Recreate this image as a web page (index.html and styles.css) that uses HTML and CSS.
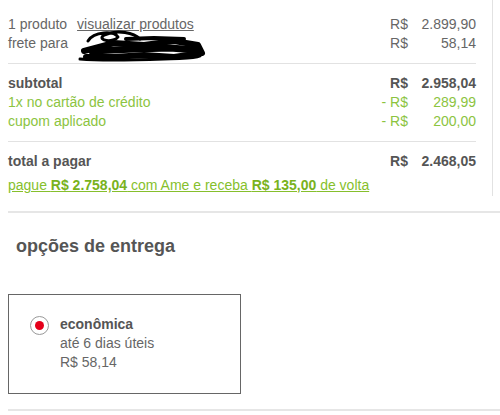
FILE: index.html
```html
<!DOCTYPE html>
<html lang="pt-BR">
<head>
    <meta charset="UTF-8">
    <title>Resumo do pedido</title>
    <link rel="stylesheet" href="styles.css">
</head>
<body>
    <div class="summary">
        <div class="group">
            <div class="row">
                <span class="label">1 produto <a href="#" class="link">visualizar produtos</a></span>
                <span class="cur">R$</span>
                <span class="val">2.899,90</span>
            </div>
            <div class="row">
                <span class="label">frete para</span>
                <span class="cur">R$</span>
                <span class="val">58,14</span>
                <svg class="scribble" width="140" height="34" viewBox="0 0 140 34">
                    <g fill="none" stroke="#000" stroke-linecap="round" stroke-linejoin="round">
                        <path stroke-width="3" d="M14 12 C20 2 40 2 44 8 C40 14 22 12 30 6 C44 0 60 4 66 10"/>
                        <path stroke-width="6" d="M10 22 L40 14 L70 16 L100 12 L124 16 L128 24 L100 28 L70 26 L40 28 L12 28"/>
                        <path stroke-width="7" d="M18 22 L60 20 L96 19 L122 21"/>
                        <path stroke-width="3" d="M6 30 C30 32 60 31 90 30 C110 29 120 30 126 27"/>
                        <path stroke-width="4" d="M52 10 L80 9 L110 10"/>
                    </g>
                </svg>
            </div>
        </div>

        <div class="group">
            <div class="row strong">
                <span class="label">subtotal</span>
                <span class="cur">R$</span>
                <span class="val">2.958,04</span>
            </div>
            <div class="row green">
                <span class="label">1x no cartão de crédito</span>
                <span class="cur">- R$</span>
                <span class="val">289,99</span>
            </div>
            <div class="row green">
                <span class="label">cupom aplicado</span>
                <span class="cur">- R$</span>
                <span class="val">200,00</span>
            </div>
        </div>

        <div class="group last">
            <div class="row strong">
                <span class="label">total a pagar</span>
                <span class="cur">R$</span>
                <span class="val">2.468,05</span>
            </div>
            <a href="#" class="ame">pague <b>R$ 2.758,04</b> com Ame e receba <b>R$ 135,00</b> de volta</a>
        </div>
    </div>

    <div class="delivery">
        <h3 class="title">opções de entrega</h3>
        <label class="option">
            <span class="radio"><span class="dot"></span></span>
            <span class="info">
                <span class="name">econômica</span>
                <span>até 6 dias úteis</span>
                <span>R$ 58,14</span>
            </span>
        </label>
    </div>
</body>
</html>
```

FILE: styles.css
```css
body {
    margin: 0;
    font-family: "Liberation Sans", Arial, sans-serif;
    font-size: 14px;
    color: #666;
    background: #fff;
}
.summary {
    width: 468px;
    padding: 5px 16px 1px 8px;
    border-right: 1px solid #e2e2e2;
}
.group {
    padding: 10px 0;
    border-bottom: 1px solid #e2e2e2;
}
.group.last {
    border-bottom: none;
    padding-bottom: 0;
}
.row {
    position: relative;
    display: flex;
    line-height: 19px;
}
.label {
    flex: 1;
}
.cur {
    text-align: right;
}
.val {
    width: 68px;
    text-align: right;
}
.link {
    color: #666;
    margin-left: 6px;
}
.strong {
    font-weight: bold;
    color: #555;
}
.green {
    color: #8cc43f;
}
.scribble {
    position: absolute;
    left: 66px;
    top: -5px;
}
.ame {
    display: block;
    margin-top: 5px;
    line-height: 19px;
    color: #86bf2c;
}
.ame b {
    color: #79b21c;
}
.delivery {
    margin: 15px 0 0 8px;
    padding-bottom: 15px;
    border-top: 2px solid #e6e6e6;
    border-bottom: 2px solid #e6e6e6;
}
.title {
    margin: 22px 0 0 8px;
    font-size: 18px;
    line-height: 22px;
    color: #555;
}
.option {
    display: flex;
    gap: 11px;
    width: 196px;
    margin-top: 37px;
    padding: 21px 14px 21px 21px;
    border: 1px solid #666;
}
.radio {
    display: flex;
    align-items: center;
    justify-content: center;
    width: 19px;
    height: 19px;
    border: 1px solid #999;
    border-radius: 50%;
    box-sizing: border-box;
}
.dot {
    width: 9px;
    height: 9px;
    border-radius: 50%;
    background: #e5001a;
}
.info {
    display: flex;
    flex-direction: column;
    line-height: 19px;
    margin-top: -1px;
}
.name {
    font-weight: bold;
    color: #555;
}
```
